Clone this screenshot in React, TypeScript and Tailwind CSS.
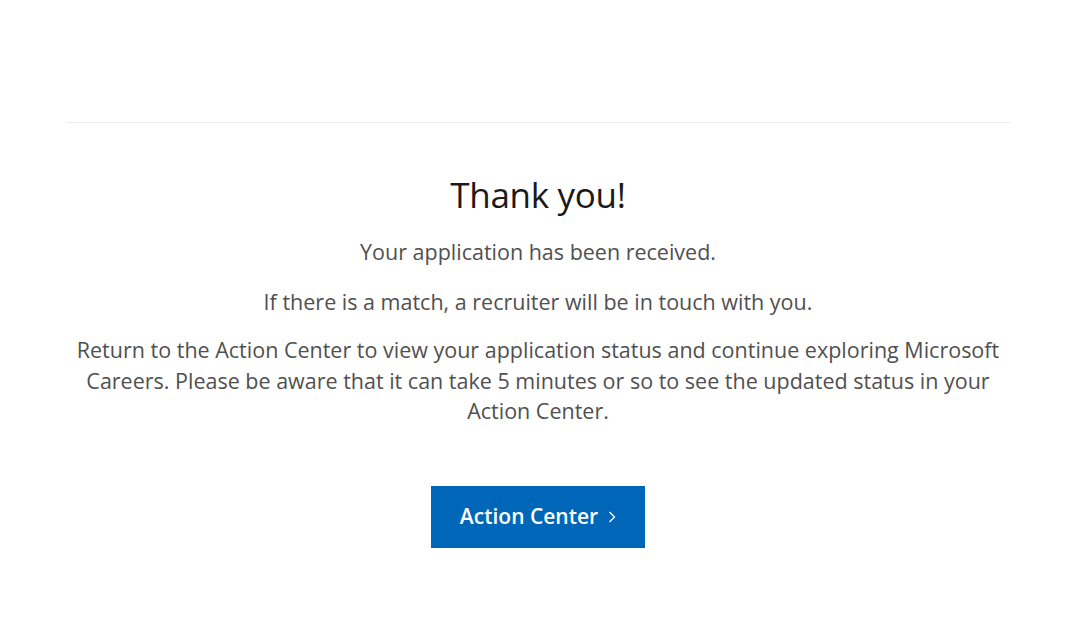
export default function App() {
  return (
    <div className="min-h-[642px] w-[1080px] bg-white font-['Open_Sans',sans-serif]">
      <div className="ml-[66px] w-[944px] pt-[122px]">
        <div className="h-px bg-[#ececec]" />
        <div className="flex flex-col items-center pt-[49px] text-center">
          <h1 className="text-[35px] leading-[46px] text-[#1a1a1a] tracking-[-0.3px]">Thank you!</h1>
          <p className="mt-[19px] text-[21.5px] leading-[30px] text-[#505050]">
            Your application has been received.
          </p>
          <p className="mt-[20px] text-[21.5px] leading-[30px] text-[#505050]">
            If there is a match, a recruiter will be in touch with you.
          </p>
          <p className="mt-[18px] text-[21.5px] leading-[30.5px] text-[#505050]">
            Return to the Action Center to view your application status and continue exploring Microsoft
            Careers. Please be aware that it can take 5 minutes or so to see the updated status in your
            Action Center.
          </p>
          <button className="mt-[59px] flex h-[62px] w-[214px] items-center justify-center gap-[10px] bg-[#0067b8] text-[21px] font-semibold text-white">
            <span>Action Center</span>
            <svg width="8" height="14" viewBox="0 0 8 14" fill="none" stroke="white" strokeWidth="1.3">
              <path d="M1.5 2l5 5-5 5" />
            </svg>
          </button>
        </div>
      </div>
    </div>
  );
}
